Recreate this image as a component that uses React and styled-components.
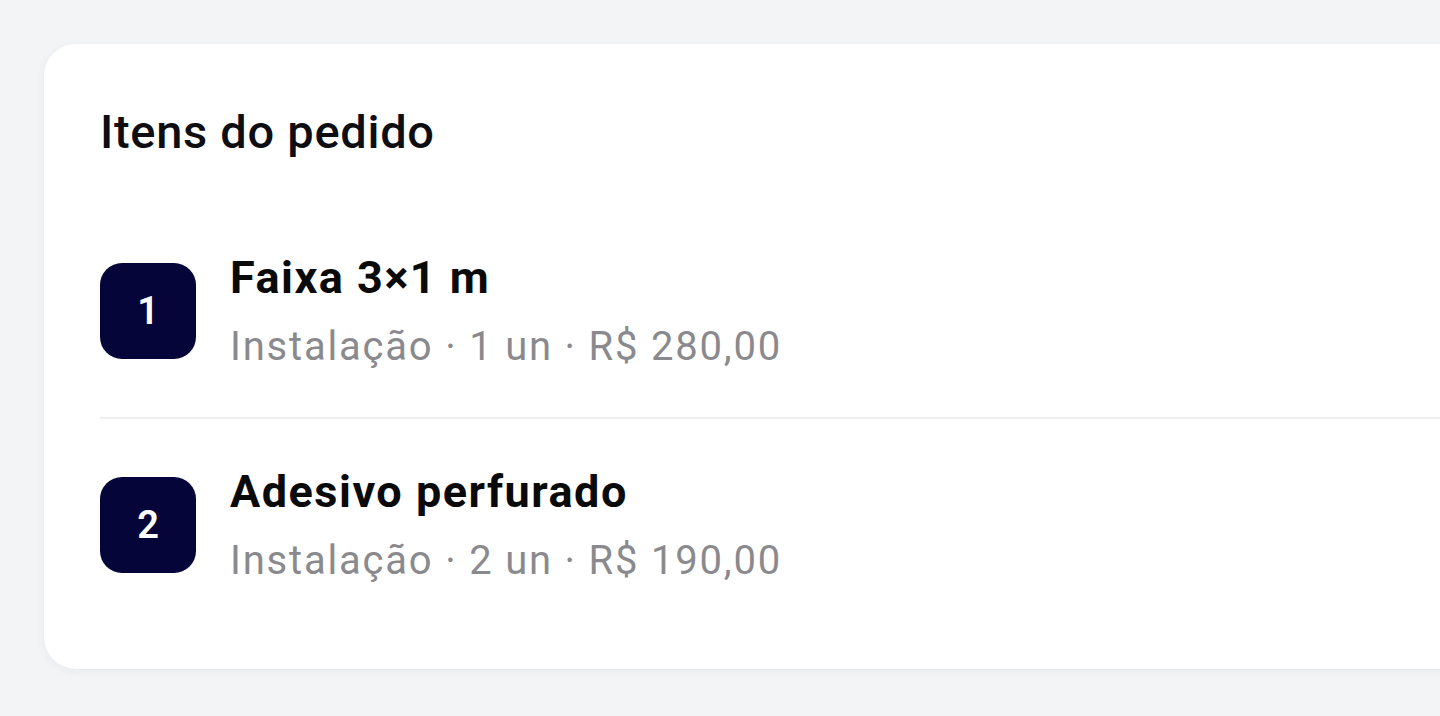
import React from "react";
import styled, { createGlobalStyle } from "styled-components";

const Global = createGlobalStyle`
  html, body { margin: 0; padding: 0; background: #f3f4f6; overflow: hidden; }
  body { font-family: Roboto, "Noto Sans", "Liberation Sans", sans-serif; }
  * { box-sizing: border-box; }
`;

const Page = styled.div`
  width: 1440px;
  height: 716px;
  padding: 44px 0 0 44px;
  overflow: hidden;
`;

const Card = styled.section`
  width: 1480px;
  background: #ffffff;
  border-radius: 32px;
  box-shadow: 0 2px 10px rgba(15, 23, 42, 0.05);
  padding: 60px 56px 38px 56px;
`;

const Title = styled.h2`
  margin: 0 0 45px 0;
  font-size: 47px;
  line-height: 1.2;
  font-weight: 500;
  letter-spacing: 0.7px;
  color: #0d0d12;
`;

const List = styled.div`
  display: flex;
  flex-direction: column;
`;

const Row = styled.div`
  display: flex;
  align-items: center;
  gap: 34px;
  padding: 46px 0;
  border-top: ${(p) => (p.$first ? "none" : "2px solid #efeff1")};
`;

const Badge = styled.div`
  flex: 0 0 auto;
  width: 96px;
  height: 96px;
  border-radius: 22px;
  background: #05053a;
  color: #ffffff;
  display: flex;
  align-items: center;
  justify-content: center;
  font-size: 38px;
  font-weight: 600;
`;

const Info = styled.div`
  display: flex;
  flex-direction: column;
  gap: 18px;
`;

const Name = styled.div`
  font-size: 45px;
  line-height: 1.2;
  font-weight: 700;
  letter-spacing: 1.5px;
  color: #0a0a0a;
`;

const Meta = styled.div`
  font-size: 40px;
  line-height: 1.2;
  font-weight: 400;
  letter-spacing: 1.8px;
  color: #8a8a8e;
`;

const items = [
  { n: 1, name: "Faixa 3×1 m", meta: "Instalação · 1 un · R$ 280,00" },
  { n: 2, name: "Adesivo perfurado", meta: "Instalação · 2 un · R$ 190,00" },
];

export default function App() {
  return (
    <>
      <Global />
      <Page>
        <Card>
          <Title>Itens do pedido</Title>
          <List>
            {items.map((it, i) => (
              <Row key={it.n} $first={i === 0}>
                <Badge>{it.n}</Badge>
                <Info>
                  <Name>{it.name}</Name>
                  <Meta>{it.meta}</Meta>
                </Info>
              </Row>
            ))}
          </List>
        </Card>
      </Page>
    </>
  );
}
